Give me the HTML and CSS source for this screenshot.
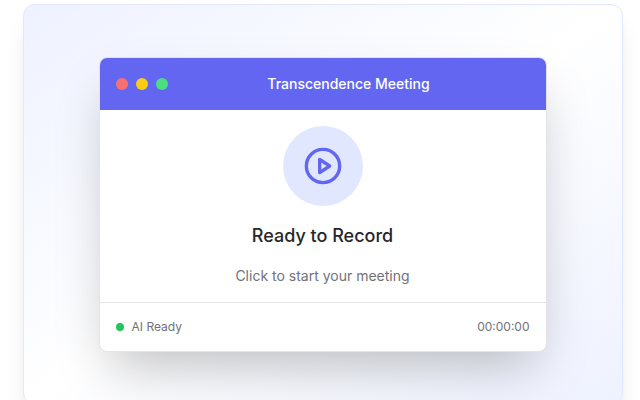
FILE: index.html
```html
<!DOCTYPE html>
<html lang="en">
<head>
<meta charset="utf-8">
<title>Transcendence Meeting</title>
<link rel="stylesheet" href="styles.css">
</head>
<body>
<main class="stage">
  <section class="window">
    <header class="titlebar">
      <div class="dots"><span class="dot red"></span><span class="dot yellow"></span><span class="dot green"></span></div>
      <div class="title">Transcendence Meeting</div>
    </header>
    <div class="content">
      <div class="play">
        <svg width="40" height="40" viewBox="0 0 24 24" fill="none" stroke="currentColor" stroke-width="2" stroke-linecap="round" stroke-linejoin="round"><circle cx="12" cy="12" r="10"/><polygon points="10 8 16 12 10 16 10 8"/></svg>
      </div>
      <h1 class="heading">Ready to Record</h1>
      <p class="hint">Click to start your meeting</p>
    </div>
    <footer class="status">
      <div class="ready"><span class="led"></span><span>AI Ready</span></div>
      <span>00:00:00</span>
    </footer>
  </section>
</main>
</body>
</html>
```
FILE: styles.css
```css
* { box-sizing: border-box; margin: 0; }
body {
  height: 400px;
  overflow: hidden;
  background: #fff;
  font-family: Inter, sans-serif;
  padding: 4px 17.5px 0 22.5px;
}
.stage {
  height: 401px;
  border: 1px solid #e0e7ff;
  border-radius: 12px;
  background: linear-gradient(to bottom right, #eef2ff, #fff, #eef2ff);
  box-shadow: 0 20px 25px -5px rgba(0,0,0,.1), 0 8px 10px -6px rgba(0,0,0,.1);
  display: flex;
  justify-content: center;
  align-items: flex-start;
  padding-top: 52px;
}
.window {
  width: 448px;
  border: 1px solid #e4e4e7;
  border-radius: 8px;
  background: #fff;
  overflow: hidden;
  box-shadow: 0 25px 50px -12px rgba(0,0,0,.25);
}
.titlebar {
  height: 52px;
  padding: 0 16px;
  background: #6366f1;
  display: flex;
  align-items: center;
}
.dots { display: flex; gap: 8px; }
.dot { width: 12px; height: 12px; border-radius: 50%; }
.red { background: #f87171; }
.yellow { background: #facc15; }
.green { background: #4ade80; }
.title {
  flex: 1;
  text-align: center;
  color: #fff;
  font-size: 14px;
  line-height: 20px;
  font-weight: 500;
}
.content {
  height: 192px;
  padding-top: 16px;
  display: flex;
  flex-direction: column;
  align-items: center;
}
.play {
  width: 80px;
  height: 80px;
  border-radius: 50%;
  background: #e0e7ff;
  color: #6366f1;
  display: flex;
  align-items: center;
  justify-content: center;
}
.heading {
  margin-top: 16px;
  font-size: 18px;
  line-height: 28px;
  font-weight: 500;
  color: #27272a;
}
.hint {
  margin-top: 16px;
  font-size: 14px;
  line-height: 20px;
  color: #71717a;
}
.status {
  height: 49px;
  padding: 0 16px;
  border-top: 1px solid #e4e4e7;
  display: flex;
  align-items: center;
  justify-content: space-between;
  font-size: 12px;
  line-height: 16px;
  color: #71717a;
}
.ready { display: flex; align-items: center; gap: 8px; }
.led { width: 8px; height: 8px; border-radius: 50%; background: #22c55e; }
```
